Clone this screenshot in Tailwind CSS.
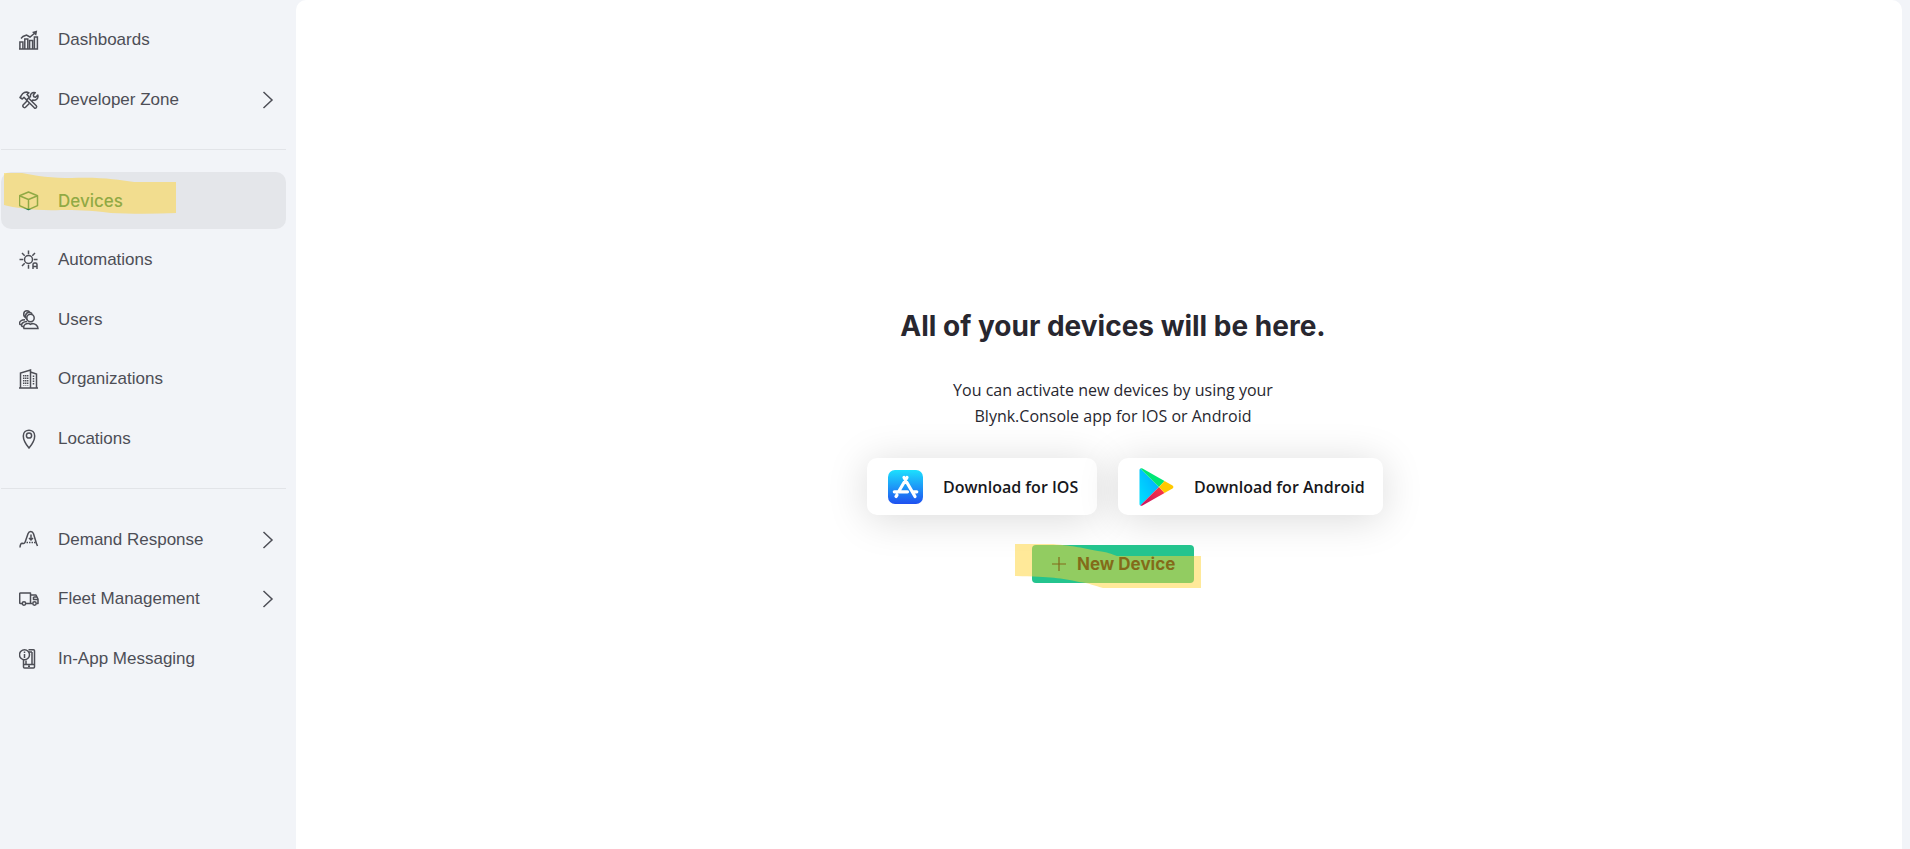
<!DOCTYPE html>
<html lang="en">
<head>
  <meta charset="UTF-8" />
  <meta name="viewport" content="width=device-width, initial-scale=1.0"/>
  <title>Blynk.Console - Devices</title>
  <script src="https://cdn.jsdelivr.net/npm/@tailwindcss/browser@4"></script>
</head>
<body class="bg-[#f2f4f8] min-h-screen flex pr-2 font-['Inter',sans-serif] text-[#4d4e56]">

  <!-- Sidebar -->
  <nav class="w-[296px] shrink-0 pl-px pr-[10px] pt-[11px] font-['Liberation_Sans',sans-serif] text-[17px] leading-6">
    <div class="h-[117px] flex flex-col justify-between">
      <a href="#" class="h-[57px] flex items-center gap-[19px] pl-[18px] pr-3 rounded-[10px]">
        <svg class="size-5" viewBox="0 0 20 20" fill="none" stroke="currentColor" stroke-width="1.5">
          <path d="M.9 19v-7h3v7zM5.800 19V9h3v10zM10.600 19v-8.500h3V19zM15.400 19V7h3v12zM0 19h19"/>
          <path d="M2 8.500 4 6.500 7.500 5l3.500 2 5.500-4.500"/>
          <path d="M13 2 18.200.5l-1 5.200z" fill="currentColor" stroke="none"/>
        </svg>
        Dashboards
      </a>
      <a href="#" class="h-[57px] flex items-center gap-[19px] pl-[18px] pr-3 rounded-[10px]">
        <svg class="size-5" viewBox="0 0 20 20" fill="none" stroke="currentColor" stroke-width="1.5" stroke-linejoin="round">
          <path d="m9.500 8 7.800 7.800c1.100 1.400-.6 3-2 2L7.500 10"/>
          <path d="m1 7.500 2.500-3.700C5.500 2 8 1.800 10 2.800L8 4.500l2.300 2.800-2.800 2.800L5 7.200 3.300 9z"/>
          <path d="m8 11-3.700 3.800c-1.300 1.500.6 3.800 2.200 2.400l3.800-3.700M11.500 7.500C10.800 4.500 13 1.700 16.300 2.600L14.300 5l.5 1.800 1.800.5 2.200-2.200c1 3.400-2 5.700-5 4.900l-1 1"/>
        </svg>
        <span class="flex-1">Developer Zone</span>
        <svg class="w-3 h-[18px]" viewBox="0 0 12 18" fill="none" stroke="currentColor" stroke-width="1.5"><path d="m1.500 1 8.500 8-8.500 8"/></svg>
      </a>
    </div>

    <hr class="mt-[21px] mb-[22px] border-[#e2e4e8]"/>

    <div class="h-[295px] flex flex-col justify-between">
      <a href="#" class="relative h-[57px] flex items-center gap-[19px] pl-[18px] pr-3 rounded-[10px] bg-[#e4e6ea] text-[#207f55] font-['Inter',sans-serif] font-medium">
        <svg class="size-5" viewBox="0 0 20 20" fill="none" stroke="currentColor" stroke-width="1.5" stroke-linejoin="round">
          <path d="m9.500 1 9 3.800v9.800l-9 4-9-4V4.800zM.5 4.800l9 3.700 9-3.700M9.500 8.500v10"/>
        </svg>
        Devices
        <!-- marker stroke -->
        <svg class="absolute left-[3px] top-0 w-[172px] h-[42px] pointer-events-none" viewBox="0 0 172 42" fill="#ffd333" fill-opacity=".5">
          <path d="M0 1h18c14 3 30 5 50 5 32-1 45 2 62 4h42v31c-22 1-45 1-65 0-22-3-35-3-50-3C32 39 12 36 0 33z"/>
        </svg>
      </a>
      <a href="#" class="h-[57px] flex items-center gap-[19px] pl-[18px] pr-3 rounded-[10px]">
        <svg class="size-5" viewBox="0 0 20 20" fill="none" stroke="currentColor" stroke-width="1.5">
          <circle cx="9.500" cy="9.500" r="4"/>
          <path d="M9.500.5v3.700M9.500 14.800v4M.5 9.500h3.700M14.800 9.500h3.700M3 3l2.700 2.700M16 3l-2.700 2.700M5.700 13.300 3 16"/>
          <path d="M14 19v-4.500q0-1.500 1.500-1.500h1q1.500 0 1.500 1.500V19M14 16.500h4"/>
        </svg>
        Automations
      </a>
      <a href="#" class="h-[57px] flex items-center gap-[19px] pl-[18px] pr-3 rounded-[10px]">
        <svg class="size-5" viewBox="0 0 20 20" fill="none" stroke="currentColor" stroke-width="1.5">
          <circle cx="11.500" cy="8" r="3.700"/>
          <path d="M7.300 8C3.500 6.500 4 .8 8 .8c1.300 0 2.300.6 3 1.600M8.500 10C5 7.500 6.500 2.500 10 2.300c1.500 0 2.300.5 3.200 1.500"/>
          <path d="M5 18.500c-1.300-3.500 2.200-5.500 5-5l1.500.8 1.500-.8c3 0 6 2 6 5zM2.800 16.500c-1-3 1.700-5 5.200-5M.7 14.500C-.3 11.500 2.500 9.800 6 9.800M.7 14.500h2.200M2.800 16.500H5"/>
        </svg>
        Users
      </a>
      <a href="#" class="h-[57px] flex items-center gap-[19px] pl-[18px] pr-3 rounded-[10px]">
        <svg class="size-5" viewBox="0 0 20 20" fill="none" stroke="currentColor" stroke-width="1.5">
          <path d="M0 19h19M1.500 19V4l10-3v18M11.500 3l6 2v14"/>
          <path d="M4.700 6v10.500M6.700 6v10.500M8.700 6v10.500M14.500 6.500v10" stroke-dasharray="1.500 1"/>
        </svg>
        Organizations
      </a>
      <a href="#" class="h-[57px] flex items-center gap-[19px] pl-[18px] pr-3 rounded-[10px]">
        <svg class="size-5" viewBox="0 0 20 20" fill="none" stroke="currentColor" stroke-width="1.5">
          <path d="M10 19C7 15.500 4.300 11 4.300 7c0-7.800 11.400-7.800 11.400 0 0 4-2.700 8.500-5.700 12z"/>
          <circle cx="10" cy="6.500" r="2.600"/>
        </svg>
        Locations
      </a>
    </div>

    <hr class="mt-[21px] mb-[22px] border-[#e2e4e8]"/>

    <div class="h-[176px] flex flex-col justify-between">
      <a href="#" class="h-[57px] flex items-center gap-[19px] pl-[18px] pr-3 rounded-[10px]">
        <svg class="size-5" viewBox="0 0 20 20" fill="none" stroke="currentColor" stroke-width="1.5">
          <path d="M1 17.500c.2-3 1-4.500 2.500-4.200 1.800 1 2.500-.8 3-2.300L9 3.800c1-3 4.500-3 5.500 0L17 12c.3 1.500 1 2.700 1.500 4"/>
          <path d="M7.500 12.500H17" stroke-dasharray="1.500 1"/>
          <path d="M12 4.500V10M10 8l2 2 2-2"/>
        </svg>
        <span class="flex-1">Demand Response</span>
        <svg class="w-3 h-[18px]" viewBox="0 0 12 18" fill="none" stroke="currentColor" stroke-width="1.5"><path d="m1.500 1 8.500 8-8.500 8"/></svg>
      </a>
      <a href="#" class="h-[57px] flex items-center gap-[19px] pl-[18px] pr-3 rounded-[10px]">
        <svg class="size-5" viewBox="0 0 20 20" fill="none" stroke="currentColor" stroke-width="1.5" stroke-linejoin="round">
          <path d="M3 14.500H1.500q-.8 0-.8-.8V4.800q0-.8.8-.8h10v10.500H7M12 6h5l2 4v4.500h-1.500M11.500 14.500h2M14.500 8v2.500H19M14.500 8H18"/>
          <circle cx="5" cy="14.500" r="1.700"/>
          <circle cx="15.500" cy="14.500" r="1.700"/>
        </svg>
        <span class="flex-1">Fleet Management</span>
        <svg class="w-3 h-[18px]" viewBox="0 0 12 18" fill="none" stroke="currentColor" stroke-width="1.5"><path d="m1.500 1 8.500 8-8.500 8"/></svg>
      </a>
      <a href="#" class="h-[57px] flex items-center gap-[19px] pl-[18px] pr-3 rounded-[10px]">
        <svg class="size-5" viewBox="0 0 20 20" fill="none" stroke="currentColor" stroke-width="1.5">
          <circle cx="5.500" cy="5.800" r="5"/>
          <path d="M5.500 5v4M5.500 2.500V4"/>
          <path d="M4.500 11v7q0 1 1 1h9q1 0 1-1V1.800q0-1-1-1h-5M13 3v12.500H7v-4M9.500 3H13M4.500 15.500h11M9 17.300h2"/>
        </svg>
        In-App Messaging
      </a>
    </div>
  </nav>

  <!-- Empty state -->
  <main class="flex-1 bg-white rounded-t-[10px] pl-7 pt-[306px] flex flex-col items-center">
    <h1 class="text-[28px] leading-10 font-bold text-[#28272f]">All of your devices will be here.</h1>
    <p class="mt-[31px] text-center text-[16px] leading-[26px] font-['Open_Sans',sans-serif] text-[#28272f]">
      You can activate new devices by using your<br/>
      Blynk.Console app for IOS or Android
    </p>

    <div class="mt-[29px] pl-6 flex gap-[21px] font-['Open_Sans',sans-serif] text-[16px] font-semibold text-[#17171b]">
      <a href="#" class="w-[230px] h-[57px] flex items-center gap-5 pl-[21px] bg-white rounded-[10px] shadow-[0_4px_40px_rgba(0,0,0,0.15)] whitespace-nowrap">
        <svg class="w-[35px] h-[34px]" viewBox="0 0 35 34" fill="none" stroke="#fff" stroke-width="3.200" stroke-linecap="round">
          <defs>
            <linearGradient id="store" x1="0" y1="0" x2="0" y2="1">
              <stop offset="0" stop-color="#1ce0fe"/>
              <stop offset="1" stop-color="#1f50f0"/>
            </linearGradient>
          </defs>
          <rect width="35" height="34" rx="7" fill="url(#store)" stroke="none"/>
          <path d="m19 7.500-8.300 14M16 7.500l11 19M6.300 21.800h13.200M24.500 21.800h4.300M9 25l-1 1.500"/>
        </svg>
        Download for IOS
      </a>
      <a href="#" class="w-[265px] h-[57px] flex items-center gap-5 pl-[21px] bg-white rounded-[10px] shadow-[0_4px_40px_rgba(0,0,0,0.15)] whitespace-nowrap">
        <svg class="w-[35px] h-[38px]" viewBox="0 0 35 38">
          <defs>
            <linearGradient id="play" x1="1" y1="0" x2="0" y2="1">
              <stop offset="0" stop-color="#00a6ff"/>
              <stop offset="1" stop-color="#00e2ff"/>
            </linearGradient>
            <linearGradient id="red" x1="1" y1="0" x2="0" y2="1">
              <stop offset="0" stop-color="#ff3a44"/>
              <stop offset="1" stop-color="#c31162"/>
            </linearGradient>
          </defs>
          <path d="M1.300.5Q.5 1 .5 2v34q0 1 .8 1.500L20 19z" fill="url(#play)"/>
          <path d="M1.300.5Q2.300 0 3.500.6L25.500 13 20 19z" fill="#00e676"/>
          <path d="M1.300 37.500q1 .5 2.200-.1L25.500 25 20 19z" fill="url(#red)"/>
          <path d="m25.500 13 8 4.500q1.800 1.500 0 3l-8 4.500-5.500-6z" fill="#ffc900"/>
        </svg>
        Download for Android
      </a>
    </div>

    <div class="relative mt-[30px]">
      <button type="button" class="w-[162px] h-[38px] flex items-center gap-[11px] pl-5 rounded bg-[#24c48e] text-[17px] leading-6 font-bold text-[#060000] whitespace-nowrap">
        <svg class="size-[14px]" viewBox="0 0 14 14" fill="none" stroke="currentColor" stroke-width="1.200"><path d="M7 0v14M0 7h14"/></svg>
        New Device
      </button>
      <!-- marker stroke -->
      <svg class="absolute -left-[17px] -top-px w-[186px] h-[44px] pointer-events-none" viewBox="0 0 186 44" fill="#ffd333" fill-opacity=".5">
        <path d="M0 0h38c22 2 30 4 45 7 10 1 13 3 19 5h84v32H88c-8-2-14-5-24-6-18-4-28-5-64-6z"/>
      </svg>
    </div>
  </main>

</body>
</html>
